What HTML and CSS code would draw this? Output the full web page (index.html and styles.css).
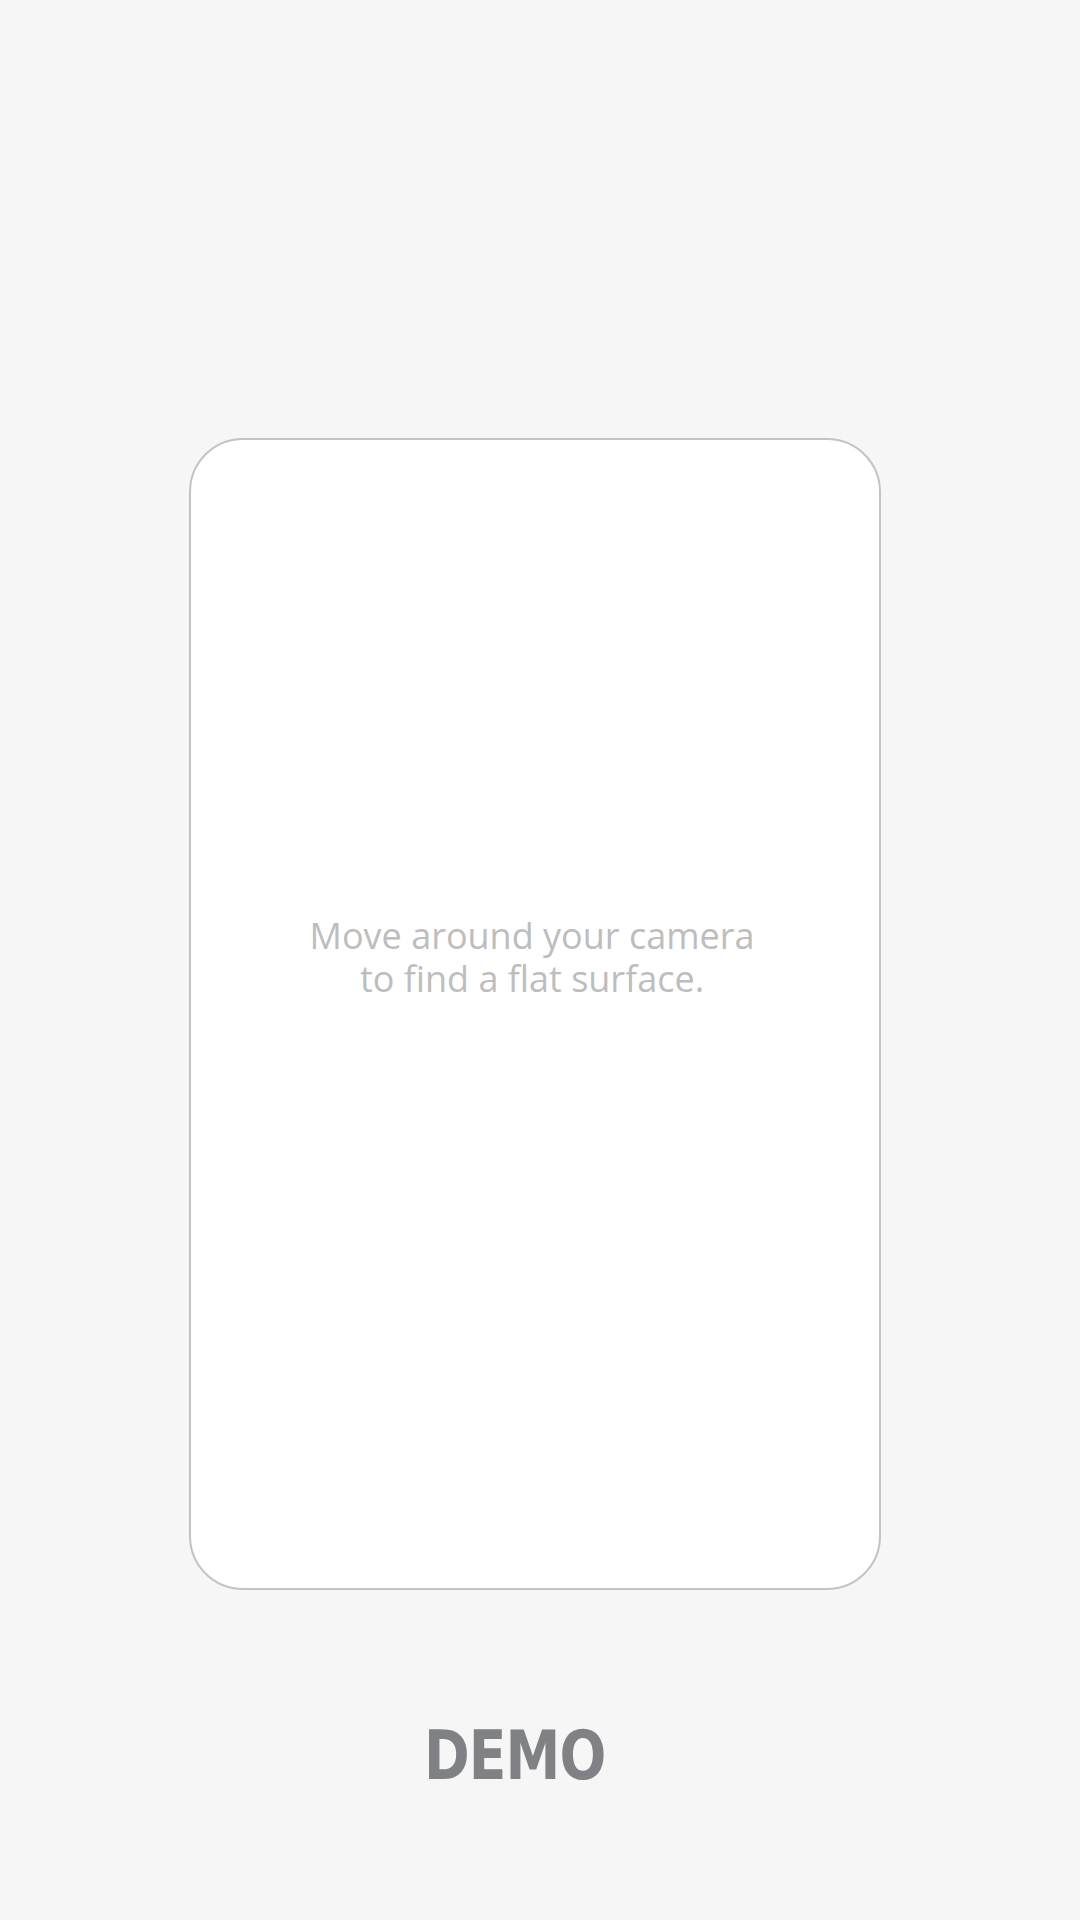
FILE: index.html
```html
<!DOCTYPE html>
<html>
<head>
<meta charset="utf-8">
<link rel="stylesheet" href="styles.css">
</head>
<body>
<main class="screen">
  <section class="viewport">
    <p class="hint">Move around your camera<br>to find a flat surface.</p>
  </section>
  <div class="brand">DEMO</div>
</main>
</body>
</html>
```
FILE: styles.css
```css
html, body {
  margin: 0;
  padding: 0;
  background: #f6f6f6;
}
.screen {
  width: 1080px;
  height: 1920px;
  box-sizing: border-box;
  padding-top: 438px;
  padding-left: 189px;
  display: flex;
  flex-direction: column;
}
.viewport {
  width: 692px;
  height: 1152px;
  box-sizing: border-box;
  border: 2px solid #c3c3c3;
  border-radius: 54px;
  background: #ffffff;
  padding: 0 6px 114px 0;
  display: flex;
  align-items: center;
  justify-content: center;
}
.hint {
  margin: 0;
  font-family: "Open Sans", sans-serif;
  font-size: 36px;
  line-height: 43px;
  color: #bdbdbd;
  text-align: center;
}
.brand {
  margin-top: 132px;
  margin-left: 235px;
  width: 220px;
  font-family: "DejaVu Sans", sans-serif;
  font-weight: bold;
  font-stretch: condensed;
  font-size: 68px;
  line-height: 68px;
  color: #808185;
  letter-spacing: -1px;
  transform: scaleX(0.9);
  transform-origin: left center;
}
```
